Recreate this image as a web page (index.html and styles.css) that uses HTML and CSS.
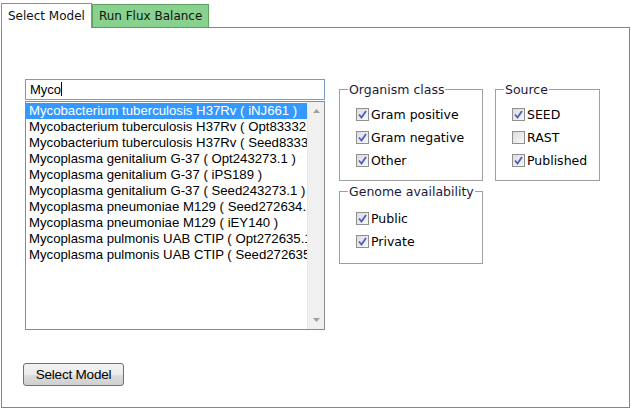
FILE: index.html
```html
<!DOCTYPE html>
<html>
<head>
<meta charset="utf-8">
<link rel="stylesheet" href="styles.css">
</head>
<body>
<div class="tabs">
  <div class="tab active">Select Model</div>
  <div class="tab">Run Flux Balance</div>
</div>
<div class="panel">
  <div class="content">
    <div class="left">
      <div class="search">Myco<span class="caret"></span></div>
      <div class="listbox">
        <ul class="items">
          <li class="sel">Mycobacterium tuberculosis H37Rv ( iNJ661 )</li>
          <li>Mycobacterium tuberculosis H37Rv ( Opt83332.1 )</li>
          <li>Mycobacterium tuberculosis H37Rv ( Seed83332.1 )</li>
          <li>Mycoplasma genitalium G-37 ( Opt243273.1 )</li>
          <li>Mycoplasma genitalium G-37 ( iPS189 )</li>
          <li>Mycoplasma genitalium G-37 ( Seed243273.1 )</li>
          <li>Mycoplasma pneumoniae M129 ( Seed272634.1 )</li>
          <li>Mycoplasma pneumoniae M129 ( iEY140 )</li>
          <li>Mycoplasma pulmonis UAB CTIP ( Opt272635.1 )</li>
          <li>Mycoplasma pulmonis UAB CTIP ( Seed272635.1 )</li>
        </ul>
        <div class="scrollbar">
          <svg class="arrow" width="7" height="4" viewBox="0 0 7 4"><path d="M3.5 0L7 4H0z" fill="#a0a0a0"/></svg>
          <svg class="arrow" width="7" height="4" viewBox="0 0 7 4"><path d="M0 0H7L3.5 4z" fill="#a0a0a0"/></svg>
        </div>
      </div>
    </div>
    <div class="filters">
      <div class="fcol">
        <fieldset class="group g-org">
          <legend>Organism class</legend>
          <label class="opt"><span class="cb on"><svg width="9" height="9" viewBox="0 0 9 9"><path d="M1 4.5L3.5 7.5L8 1" fill="none" stroke="#4a5fc0" stroke-width="1.8"/></svg></span>Gram positive</label>
          <label class="opt"><span class="cb on"><svg width="9" height="9" viewBox="0 0 9 9"><path d="M1 4.5L3.5 7.5L8 1" fill="none" stroke="#4a5fc0" stroke-width="1.8"/></svg></span>Gram negative</label>
          <label class="opt"><span class="cb on"><svg width="9" height="9" viewBox="0 0 9 9"><path d="M1 4.5L3.5 7.5L8 1" fill="none" stroke="#4a5fc0" stroke-width="1.8"/></svg></span>Other</label>
        </fieldset>
        <fieldset class="group g-gen">
          <legend>Genome availability</legend>
          <label class="opt"><span class="cb on"><svg width="9" height="9" viewBox="0 0 9 9"><path d="M1 4.5L3.5 7.5L8 1" fill="none" stroke="#4a5fc0" stroke-width="1.8"/></svg></span>Public</label>
          <label class="opt"><span class="cb on"><svg width="9" height="9" viewBox="0 0 9 9"><path d="M1 4.5L3.5 7.5L8 1" fill="none" stroke="#4a5fc0" stroke-width="1.8"/></svg></span>Private</label>
        </fieldset>
      </div>
      <div class="fcol">
        <fieldset class="group g-src">
          <legend>Source</legend>
          <label class="opt"><span class="cb on"><svg width="9" height="9" viewBox="0 0 9 9"><path d="M1 4.5L3.5 7.5L8 1" fill="none" stroke="#4a5fc0" stroke-width="1.8"/></svg></span>SEED</label>
          <label class="opt"><span class="cb"></span>RAST</label>
          <label class="opt"><span class="cb on"><svg width="9" height="9" viewBox="0 0 9 9"><path d="M1 4.5L3.5 7.5L8 1" fill="none" stroke="#4a5fc0" stroke-width="1.8"/></svg></span>Published</label>
        </fieldset>
      </div>
    </div>
  </div>
  <button class="btn">Select Model</button>
</div>
</body>
</html>
```
FILE: styles.css
```css
html, body {
  margin: 0;
  background: #fff;
}
body {
  width: 631px;
  height: 410px;
  font-family: "DejaVu Sans", sans-serif;
  font-size: 12px;
  color: #000;
  overflow: hidden;
}
.tabs {
  display: flex;
  align-items: flex-end;
  padding: 3px 0 0 1px;
  height: 24px;
  position: relative;
  z-index: 1;
}
.tab {
  box-sizing: border-box;
  height: 23px;
  padding: 4px 6px 0 6px;
  border: 1px solid #5fa160;
  border-bottom: none;
  background: #88d18e;
  color: #111;
  white-space: nowrap;
}
.tab.active {
  height: 25px;
  background: #fff;
  border-color: #6aa86b;
  padding: 5px 6px 0 6px;
  margin-bottom: -1px;
}
.panel {
  box-sizing: border-box;
  margin-left: 1px;
  width: 629px;
  height: 381px;
  border: 1px solid #5e9e62;
  padding: 51px 0 0 23px;
  display: flex;
  flex-direction: column;
}
.content {
  display: flex;
  gap: 14px;
}
.left {
  width: 300px;
  display: flex;
  flex-direction: column;
  gap: 1px;
}
.search {
  box-sizing: border-box;
  height: 21px;
  border: 1px solid #7a9cc4;
  padding: 2px 4px;
  font-family: "Liberation Sans", Arial, sans-serif;
  font-size: 13px;
  line-height: 15px;
  color: #000;
}
.caret {
  display: inline-block;
  width: 1px;
  height: 14px;
  background: #000;
  vertical-align: -2px;
}
.listbox {
  box-sizing: border-box;
  height: 229px;
  border: 1px solid #8a8a8a;
  display: flex;
}
.items {
  list-style: none;
  margin: 0;
  padding: 1px 0 0 0;
  flex: 1;
  overflow: hidden;
  font-family: "Liberation Sans", Arial, sans-serif;
  font-size: 13.2px;
  line-height: 16px;
}
.items li {
  white-space: nowrap;
  overflow: hidden;
  padding-left: 3px;
}
.items li.sel {
  background: #3399ff;
  color: #fff;
}
.scrollbar {
  width: 16px;
  background: #f0f0f0;
  border-left: 1px solid #e8e8e8;
  display: flex;
  flex-direction: column;
  justify-content: space-between;
  align-items: center;
  padding: 7px 0 7px 0;
}
.filters {
  display: flex;
  gap: 12px;
  padding-top: 3px;
}
.fcol {
  display: flex;
  flex-direction: column;
  gap: 2px;
}
.group {
  margin: 0;
  border: 1px solid #a0a0a0;
  padding: 9px 0 0 16px;
  display: flex;
  flex-direction: column;
  gap: 6px;
  box-sizing: border-box;
}
.g-org { width: 144px; height: 99px; }
.g-gen { width: 144px; height: 80px; padding-top: 11px; margin-top: 1px; }
.g-src { width: 105px; height: 99px; }
legend {
  padding: 0 1px;
  margin-left: -8px;
  color: #1a1a3a;
  font-size: 12.5px;
}
.opt {
  display: flex;
  align-items: center;
  gap: 2px;
  height: 17px;
  font-size: 12.5px;
  color: #000;
}
.cb {
  box-sizing: border-box;
  width: 13px;
  height: 13px;
  border: 1px solid #8e8f8f;
  background: linear-gradient(135deg, #dcdcdc, #f8f8f8);
  display: flex;
  align-items: center;
  justify-content: center;
}
.btn {
  margin-top: 33px;
  margin-left: -2px;
  width: 101px;
  height: 23px;
  border: 1px solid #707070;
  border-radius: 3px;
  background: linear-gradient(#f2f2f2 0%, #ebebeb 50%, #dddddd 51%, #cfcfcf 100%);
  font-family: "Liberation Sans", Arial, sans-serif;
  font-size: 13.5px;
  letter-spacing: -0.2px;
  color: #000;
  padding: 0;
}
```
